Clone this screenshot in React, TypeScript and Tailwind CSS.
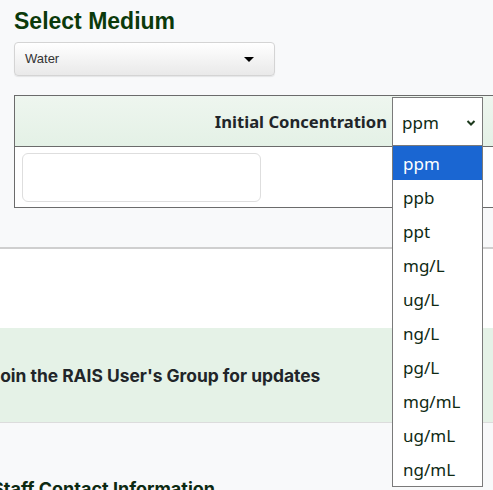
import React from 'react';

const units = ['ppm', 'ppb', 'ppt', 'mg/L', 'ug/L', 'ng/L', 'pg/L', 'mg/mL', 'ug/mL', 'ng/mL'];

export default function App() {
  return (
    <div className="w-[493px] h-[490px] overflow-hidden bg-[#f8f9fa] font-['Liberation_Sans',sans-serif]">
      <div className="pl-[14px] pt-[8px]">
        <h2 className="text-[23px] leading-[26px] font-bold text-[#0b3a0b]">Select Medium</h2>

        {/* medium dropdown */}
        <div className="mt-[8px] w-[261px] h-[34px] rounded-[4px] border border-[#d4d4d4] bg-gradient-to-b from-white to-[#e9e9e9] shadow-[0_1px_1px_rgba(0,0,0,0.08)] flex items-center justify-between pl-[10px] pr-[20px]">
          <span className="text-[13px] text-[#333]">Water</span>
          <span className="w-0 h-0 border-l-[5px] border-r-[5px] border-t-[5px] border-l-transparent border-r-transparent border-t-black" />
        </div>

        {/* concentration table */}
        <div className="mt-[19px] w-[520px] border border-[#6b6b6b] bg-white font-['Noto_Sans',sans-serif]">
          <div className="h-[51px] bg-gradient-to-b from-[#eef6ef] to-[#e4f1e6] border-b border-[#6b6b6b] flex items-center">
            <div className="w-[377px] text-right text-[16.6px] font-bold text-[#212529] pr-[5px] pt-[3px]">Initial Concentration</div>
            <div className="relative">
              <div className="w-[91px] h-[49px] bg-white border border-[#7a7a7a] flex items-center justify-between pl-[9px] pr-[6px] pt-[3px]">
                <span className="text-[17px] text-[#0f2a14]">ppm</span>
                <svg width="10" height="8" viewBox="0 0 10 8">
                  <path d="M1.5 2 L5 5.5 L8.5 2" fill="none" stroke="#1d3a1d" strokeWidth="2" />
                </svg>
              </div>
              <div className="absolute left-0 top-[48px] w-[91px] bg-white border border-[#7a7a7a] z-10">
                {units.map((u, i) => (
                  <div
                    key={u}
                    className={
                      i === 0
                        ? 'h-[34px] flex items-center pl-[10px] pt-[3px] text-[17px] bg-[#1a66d2] text-white'
                        : 'h-[34px] flex items-center pl-[10px] pt-[3px] text-[17px] text-[#0f2a14]'
                    }
                  >
                    {u}
                  </div>
                ))}
              </div>
            </div>
          </div>
          <div className="h-[60px] flex items-center pl-[7px]">
            <div className="w-[239px] h-[49px] rounded-[6px] border border-[#dedede] bg-white" />
          </div>
        </div>
      </div>

      <div className="mt-[39px] border-t-2 border-[#cfcfcf] bg-white h-[81px]" />

      <div className="h-[95px] bg-[#e5f2e7] border-b border-[#dcdcdc] flex items-center pt-[3px] font-['Inter',sans-serif]">
        <span className="-ml-[10px] text-[17.4px] font-bold text-[#212529]">Join the RAIS User's Group for updates</span>
      </div>

      <div className="pt-[52px] font-['Inter',sans-serif]">
        <span className="-ml-[8px] text-[18px] font-bold text-[#0d2a12]">Staff Contact Information</span>
      </div>
    </div>
  );
}
